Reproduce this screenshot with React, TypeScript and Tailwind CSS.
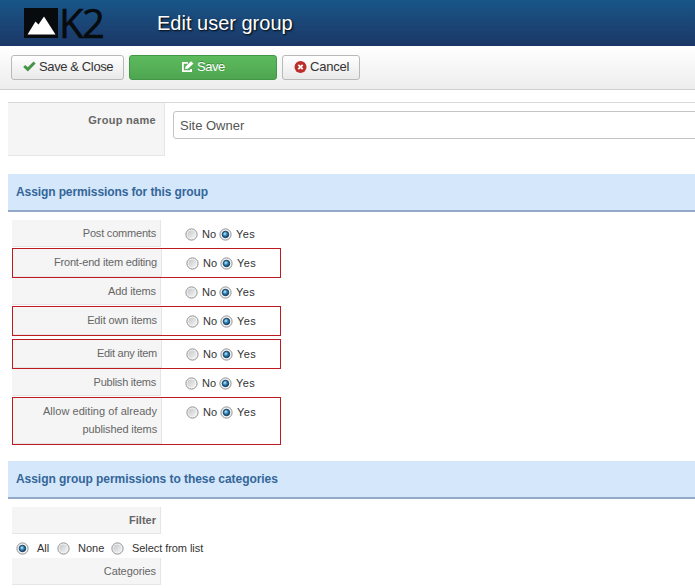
import React from 'react';

function Radio({ checked = false }: { checked?: boolean }) {
  return (
    <svg className="block h-[13px] w-[13px] shrink-0" viewBox="0 0 13 13">
      <defs>
        <linearGradient id="rim" x1="0" y1="0" x2="1" y2="1">
          <stop offset="0" stopColor="#c4c6c8" />
          <stop offset="1" stopColor="#f6f6f6" />
        </linearGradient>
        <radialGradient id="dot" cx="0.4" cy="0.38" r="0.65">
          <stop offset="0" stopColor="#c9effb" />
          <stop offset="0.45" stopColor="#3a8fc0" />
          <stop offset="1" stopColor="#0d3a63" />
        </radialGradient>
      </defs>
      <circle cx="6.5" cy="6.5" r="5.6" fill="#f7f7f7" stroke="#8c8e90" strokeWidth="1" />
      <circle cx="6.5" cy="6.5" r="4.1" fill="url(#rim)" />
      {checked && <circle cx="6.5" cy="6.5" r="3.2" fill="url(#dot)" stroke="#12395c" strokeWidth="0.9" />}
    </svg>
  );
}

type RowProps = { label: React.ReactNode; boxed?: boolean; className: string; labelClass?: string };

function PermissionRow({ label, boxed = false, className, labelClass = '' }: RowProps) {
  return (
    <div className={`flex w-[269px] ${boxed ? 'border border-[#bf1a1f]' : ''} ${className}`}>
      <div className="w-[149px] shrink-0 border-r border-b border-[#e6e6e6] bg-[#f5f5f5] pt-1 pr-1 text-right leading-[18px] text-[#666]">
        <span className={labelClass}>{label}</span>
      </div>
      <div className="mt-2 flex h-[13px] items-center pl-6 text-[#333]">
        <Radio />
        <span className="ml-[4px] w-[17px]">No</span>
        <Radio checked />
        <span className="ml-[4px] tracking-[0.4px]">Yes</span>
      </div>
    </div>
  );
}

function SectionTitle({ children, className }: { children: React.ReactNode; className: string }) {
  return (
    <h2 className={`ml-2 h-[38px] border-b-2 border-[#92a9c8] bg-[#d5e7fa] pl-2 text-[12px] leading-[36px] font-bold text-[#336699] ${className}`}>
      {children}
    </h2>
  );
}

const button = 'flex h-[25px] items-center rounded-[3px] border text-[13px]';

export default function App() {
  return (
    <div className="h-[588px] w-[695px] overflow-hidden bg-white font-['Liberation_Sans',Arial,sans-serif] text-[11px]">
      <header className="flex h-[46px] bg-linear-to-b from-[#185688] to-[#1a3766]">
        <svg className="mt-2 ml-6 h-[30px] w-[34px] shrink-0" viewBox="0 0 34 30">
          <rect width="34" height="30" fill="#080b0d" />
          <path d="M3.500 26.500 11.500 13.500l3 3L20 8.500l11.500 18z" fill="#fff" />
        </svg>
        <span className="-mt-[4px] h-[46px] w-[48px] shrink-0 pl-px font-['Open_Sans',sans-serif] text-[40px] leading-[54px] tracking-[-1.500px] text-[#080b0d] [-webkit-text-stroke:0.600px_#080b0d]">K2</span>
        <h1 className="ml-[51px] text-[20px] leading-[46px] whitespace-nowrap text-white [text-shadow:1px_1px_2px_#000]">Edit user group</h1>
      </header>

      <div className="flex h-[44px] gap-[5px] border-b border-[#cfcfcf] bg-linear-to-b from-white to-[#ededed] pt-[9px] pl-[11px]">
        <button className={`${button} w-[113px] border-[#b9b9b9] bg-linear-to-b from-white to-[#e9e9e9] pl-[11px] text-[#333]`}>
          <svg className="mr-[3px] mb-[2px] h-[11px] w-[13px] shrink-0" viewBox="0 0 13 11">
            <path d="m1.200 5 3.600 3.300L11.600 1.500" fill="none" stroke="#469649" strokeWidth="3" />
          </svg>
          <span className="pb-px tracking-[-0.38px] whitespace-nowrap">Save &amp; Close</span>
        </button>
        <button className={`${button} w-[148px] border-[#429645] bg-linear-to-b from-[#5dba5d] to-[#4ea650] pl-[51px] text-white [text-shadow:0_-1px_0_#00000040]`}>
          <svg className="mr-[3px] mb-[2px] h-[12px] w-[13px] shrink-0" viewBox="0 0 13 12">
            <path d="M7 1.900H1.900v8.200h8.200V8" fill="none" stroke="#fff" strokeWidth="1.800" />
            <path d="m4 8.300.7-2.800L10 .2l2.500 2.400-5.500 5.200z" fill="#fff" />
          </svg>
          <span className="pb-px tracking-[-0.45px]">Save</span>
        </button>
        <button className={`${button} w-[78px] border-[#b9b9b9] bg-linear-to-b from-white to-[#e9e9e9] pl-[11px] text-[#333]`}>
          <svg className="mr-[3px] mb-px h-[13px] w-[13px] shrink-0" viewBox="0 0 13 13">
            <circle cx="6.500" cy="6" r="6" fill="#bd2d29" />
            <path d="m4.300 3.800 4.400 4.400m0-4.400L4.300 8.200" stroke="#fff" strokeWidth="1.800" />
          </svg>
          <span className="pb-px tracking-[-0.2px]">Cancel</span>
        </button>
      </div>

      <div className="mt-[12px] ml-2 flex h-[54px] border-t border-[#d9d9d9]">
        <div className="w-[157px] shrink-0 border-r border-b border-[#e6e6e6] bg-[#f5f5f5] pt-[8px] pr-2 text-right leading-[18px] font-bold text-[#666]">
          <span className="tracking-[0.3px]">Group name</span>
        </div>
        <div className="mt-[8px] ml-2 flex h-[28px] w-[600px] shrink-0 items-center rounded-[3px] border border-[#c4c4c4] bg-white pt-[2px] pl-[6px] text-[13px] text-[#555]">
          Site Owner
        </div>
      </div>

      <SectionTitle className="mt-[18px] tracking-[-0.1px]">Assign permissions for this group</SectionTitle>

      <div className="mt-[8px] pl-3">
        <PermissionRow label="Post comments" labelClass="tracking-[-0.2px]" className="h-[27px]" />
        <PermissionRow boxed label="Front-end item editing" labelClass="tracking-[-0.18px]" className="mt-px h-[30px]" />
        <PermissionRow label="Add items" labelClass="tracking-[-0.1px]" className="h-[27px]" />
        <PermissionRow boxed label="Edit own items" labelClass="tracking-[-0.12px]" className="mt-px h-[30px]" />
        <PermissionRow boxed label="Edit any item" labelClass="tracking-[-0.27px]" className="mt-[3px] h-[30px]" />
        <PermissionRow label="Publish items" labelClass="tracking-[-0.23px]" className="h-[27px]" />
        <PermissionRow boxed label={<>Allow editing of already<br /><span className="tracking-[-0.13px]">published items</span></>} labelClass="tracking-[0.04px]" className="mt-px h-[48px]" />
      </div>

      <SectionTitle className="mt-[16px] tracking-[-0.05px]">Assign group permissions to these categories</SectionTitle>

      <div className="mt-[8px] pl-3">
        <div className="h-[27px] w-[149px] border-r border-b border-[#e6e6e6] bg-[#f5f5f5] pt-1 pr-1 text-right leading-[18px] font-bold text-[#666]">Filter</div>
        <div className="flex h-[24px] items-center pt-[5px] pl-[4px] text-[#333]">
          <Radio checked /><span className="ml-2 w-[20px]">All</span>
          <Radio /><span className="ml-2 w-[33px]">None</span>
          <Radio /><span className="ml-2 tracking-[-0.06px]">Select from list</span>
        </div>
        <div className="h-[27px] w-[149px] border-r border-b border-[#e6e6e6] bg-[#f5f5f5] pt-1 pr-1 text-right leading-[18px] tracking-[-0.1px] text-[#666]">Categories</div>
      </div>
    </div>
  );
}
